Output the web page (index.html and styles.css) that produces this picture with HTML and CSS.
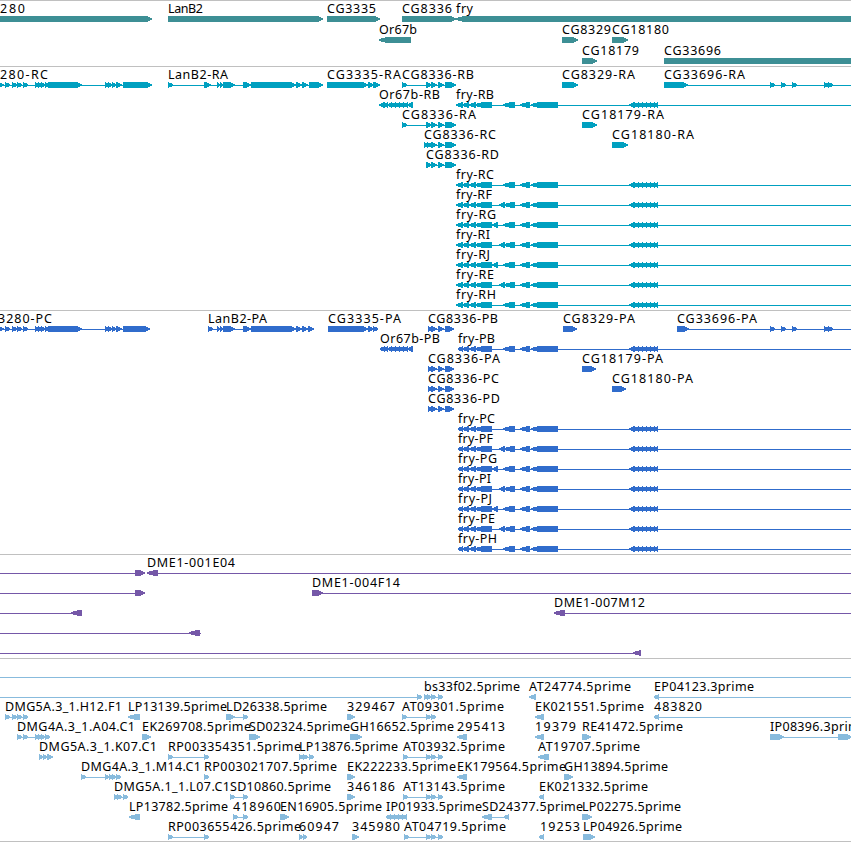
FILE: index.html
```
<!DOCTYPE html>
<html lang="en">

<head>
    <meta charset="UTF-8">
    <title>Genome Browser</title>
    <link rel="stylesheet" href="styles.css">
</head>

<body>

    <div class="browser">
        <div class="track genes" id="genes"></div>
        <div class="track transcripts" id="transcripts"></div>
        <div class="track proteins" id="proteins"></div>
        <div class="track bacs" id="bacs"></div>
        <div class="track ests" id="ests"></div>
    </div>

    <script src="tracks.js"></script>
</body>

</html>
```
FILE: styles.css
```
* {
    margin: 0;
    padding: 0;
    box-sizing: border-box;
}

body {
    background-color: white;
    overflow: hidden;
}

.browser {
    width: 851px;
    overflow: hidden;
    border-bottom: 1px solid #C0C0C0;
}

.track {
    display: flex;
    flex-direction: column;
    border-top: 1px solid #C0C0C0;
    padding-bottom: 3px;
}

/*every row is one svg, the arrows hang a bit below its box*/
.row {
    display: block;
    width: 851px;
    height: 20px;
    overflow: visible;
}

.genes .row {
    height: 21px;
}

.genes,
.ests {
    padding-bottom: 2px;
}

.genes {
    color: #3D8F95;
}

.transcripts {
    color: #00A0C0;
}

.proteins {
    color: #306CCC;
}

.bacs {
    color: #7558A8;
}

.ests {
    color: #88BBDD;
}

.shape {
    fill: currentColor;
    shape-rendering: crispEdges;
}

.label {
    fill: black;
    font-family: "Noto Sans", "DejaVu Sans", sans-serif;
    font-size: 12.5px;
}
```
FILE: tracks.js
```
/*
    A feature is [label, labelEnd, direction, exons, lineStart, lineEnd].
    The label starts at the first exon unless labelStart is given as 7th value.
    EDGE values run out of the visible region.
*/
const LEFT = -10;
const EDGE = 861;

// exons that are shared by several features
const cg3280 = [[-3, 4], [5, 10], [12, 17], [17, 22], [23, 28], [35, 39], [38, 42], [41, 45], [45, 49],
    [48, 82], [105, 109], [108, 112], [112, 116], [116, 122]];
const lanB2 = [[217, 220], [220, 223], [223, 235], [243, 251]];
const cg33696 = [[770, 775], [781, 786], [792, 797], [824, 829], [828, 833]];
const cg8336 = [[431, 437], [438, 444]];
const or67b = [[384, 388], [388, 392], [391, 396], [395, 400], [399, 404], [403, 408], [407, 413]];
const fryEnd = [[520, 530], [531, 558], [629, 635], [634, 639], [638, 643], [642, 647], [646, 651], [650, 655], [653, 658]];
const at = [[426, 431], [431, 436], [438, 443]];

// kind: '' is the plain form, 'F' and 'G' have one more exon
function fry(name, start, labelEnd, kind) {
    let exons = [[start, 463], [462, 469], [469, 476], [475, 492]];
    if (kind === 'F') {
        exons.push([499, 505], [504, 515]);
    } else if (kind === 'G') {
        exons.push([492, 498], [503, 515]);
    } else {
        exons.push([503, 515]);
    }
    return [name, labelEnd, 'L', exons.concat(fryEnd), start, EDGE];
}

const tracks = {
    genes: [
        [['280', 25, 'R', [[LEFT, 152]], LEFT, 152, 0], ['LanB2', 203, 'R', [[168, 323]]], ['CG3335', 376, 'R', [[327, 380]]],
            ['CG8336', 452, 'R', [[402, 456]]], ['fry', 473, 'L', [[456, EDGE]]]],
        [['Or67b', 417, 'L', [[379, 411]]], ['CG8329', 611, 'R', [[562, 578]]], ['CG18180', 669, 'R', [[612, 628]]]],
        [['CG18179', 639, 'R', [[582, 597]]], ['CG33696', 721, 'R', [[664, EDGE + 10]]]]
    ],
    transcripts: [
        [['280-RC', 48, 'R', cg3280.concat([[123, 152]]), LEFT, 152, 0],
            ['LanB2-RA', 228, 'R', [[168, 173], [204, 211], ...lanB2, [251, 296], [296, 302], [302, 308], [309, 323]]],
            ['CG3335-RA', 401, 'R', [[327, 368], [368, 374], [373, 380]]],
            ['CG8336-RB', 474, 'R', [[402, 407], [426, 432], ...cg8336, [445, 456]]],
            ['CG8329-RA', 635, 'R', [[562, 578]]],
            ['CG33696-RA', 745, 'R', [[664, 688], ...cg33696], 664, EDGE]],
        [['Or67b-RB', 440, 'L', [[379, 385], ...or67b]], fry('fry-RB', 456, 494, '')],
        [['CG8336-RA', 476, 'R', [[402, 407], [426, 432], ...cg8336, [445, 456]]], ['CG18179-RA', 664, 'R', [[582, 597]]]],
        [['CG8336-RC', 496, 'R', [[424, 428], [427, 432], ...cg8336, [445, 456]]], ['CG18180-RA', 694, 'R', [[612, 628]]]],
        [['CG8336-RD', 499, 'R', [[426, 432], ...cg8336, [445, 456]]]],
        [fry('fry-RC', 456, 494, '')],
        [fry('fry-RF', 456, 492, 'F')],
        [fry('fry-RG', 456, 496, 'G')],
        [fry('fry-RI', 456, 490, 'F')],
        [fry('fry-RJ', 456, 490, 'G')],
        [fry('fry-RE', 456, 494, 'F')],
        [fry('fry-RH', 456, 496, '')]
    ],
    proteins: [
        [['3280-PC', 52, 'R', cg3280.concat([[123, 150]]), LEFT, 150, -2],
            ['LanB2-PA', 267, 'R', [[208, 213], ...lanB2, [251, 296], [296, 302], [302, 308], [308, 314]]],
            ['CG3335-PA', 401, 'R', [[328, 368], [368, 374], [373, 378]]],
            ['CG8336-PB', 498, 'R', [[428, 432], ...cg8336, [445, 454]]],
            ['CG8329-PA', 635, 'R', [[563, 577]]],
            ['CG33696-PA', 757, 'R', [[677, 689], ...cg33696], 677, EDGE]],
        [['Or67b-PB', 440, 'L', [[380, 385], ...or67b]], fry('fry-PB', 458, 495, '')],
        [['CG8336-PA', 500, 'R', [[428, 432], ...cg8336, [445, 454]]], ['CG18179-PA', 663, 'R', [[582, 596]]]],
        [['CG8336-PC', 499, 'R', [[428, 432], ...cg8336, [445, 454]]], ['CG18180-PA', 693, 'R', [[612, 626]]]],
        [['CG8336-PD', 500, 'R', [[428, 432], ...cg8336, [445, 454]]]],
        [fry('fry-PC', 458, 495, '')],
        [fry('fry-PF', 458, 493, 'F')],
        [fry('fry-PG', 458, 497, 'G')],
        [fry('fry-PI', 458, 491, 'F')],
        [fry('fry-PJ', 458, 492, 'G')],
        [fry('fry-PE', 458, 495, 'F')],
        [fry('fry-PH', 458, 497, '')]
    ],
    bacs: [
        [['', 0, 'R', [[135, 145]], LEFT, 145], ['DME1-001E04', 235, 'L', [[147, 158]], 147, EDGE]],
        [['', 0, 'R', [[135, 145]], LEFT, 145], ['DME1-004F14', 400, 'R', [[312, 323]], 312, EDGE]],
        [['', 0, 'L', [[71, 82]], LEFT, 82], ['DME1-007M12', 645, 'L', [[554, 565]], 554, EDGE]],
        [['', 0, 'L', [[189, 200]], LEFT, 201]],
        [['', 0, 'L', [[633, 641]], LEFT, 641]]
    ],
    ests: [
        [['', 0, 'R', [], LEFT, EDGE]],
        [['', 0, 'R', [[417, 422]], LEFT, 422],
            ['bs33f02.5prime', 520, 'R', [[424, 428], [427, 431], [431, 436], [438, 443]]],
            ['AT24774.5prime', 631, 'L', [[529, 536]]],
            ['EP04123.3prime', 754, 'L', [[654, 659]], 654, EDGE]],
        [['DMG5A.3_1.H12.F1', 122, 'R', [[5, 10], [12, 17], [17, 22], [23, 28]]],
            ['LP13139.5prime', 227, 'L', [[128, 140]]],
            ['LD26338.5prime', 327, 'R', [[226, 235], [243, 248]]],
            ['329467', 395, 'R', [[347, 355]]],
            ['AT09301.5prime', 504, 'R', [[402, 407], [426, 431], [431, 436]]],
            ['EK021551.5prime', 644, 'L', [[535, 544]]],
            ['483820', 702, 'L', [[654, 659]], 654, EDGE]],
        [['DMG4A.3_1.A04.C1', 135, 'R', [[17, 22], [23, 28], [35, 39], [38, 42], [41, 45], [45, 50]]],
            ['EK269708.5prime', 251, 'R', [[142, 151]]],
            ['SD02324.5prime', 350, 'R', [[249, 260]]],
            ['GH16652.5prime', 454, 'R', [[350, 362]]],
            ['295413', 505, 'L', [[457, 467]]],
            ['19379', 576, 'L', [[535, 544]]],
            ['RE41472.5prime', 683, 'R', [[582, 591]]],
            ['IP08396.3prime', 867, 'R', [[770, 784], [838, 852]], 770, EDGE]],
        [['DMG5A.3_1.K07.C1', 157, 'R', [[39, 43], [43, 47], [47, 53]]],
            ['RP003354351.5prime', 301, 'R', [[168, 173], [204, 209]]],
            ['LP13876.5prime', 398, 'R', [[299, 304], [303, 308], [309, 314]]],
            ['AT03932.5prime', 505, 'R', [[403, 408], ...at]],
            ['AT19707.5prime', 640, 'L', [[538, 549]]]],
        [['DMG4A.3_1.M14.C1', 201, 'R', [[81, 86], [105, 109], [109, 113], [112, 116], [116, 121]]],
            ['RP003021707.5prime', 337, 'R', [[204, 209]]],
            ['EK222233.5prime', 456, 'R', [[347, 355]]],
            ['EK179564.5prime', 566, 'L', [[457, 467]]],
            ['GH13894.5prime', 668, 'R', [[564, 573]]]],
        [['DMG5A.1_1.L07.C1', 230, 'R', [[114, 118], [117, 122], [123, 128]]],
            ['SD10860.5prime', 331, 'R', [[230, 235], [243, 248]]],
            ['346186', 395, 'R', [[347, 355]]],
            ['AT13143.5prime', 505, 'R', [[403, 408], ...at]],
            ['EK021332.5prime', 648, 'L', [[539, 544]]]],
        [['LP13782.5prime', 228, 'L', [[129, 140]]],
            ['418960', 281, 'R', [[233, 238], [243, 248]]],
            ['EN16905.5prime', 382, 'R', [[280, 289]]],
            ['IP01933.5prime', 482, 'L', [[386, 391], [390, 395], [394, 399], [398, 403], [402, 407]]],
            ['SD24377.5prime', 583, 'L', [[482, 492], [504, 509]]],
            ['LP02275.5prime', 681, 'R', [[582, 592]]]],
        [['RP003655426.5prime', 301, 'R', [[168, 173], [204, 209]]],
            ['60947', 339, 'R', [[299, 303], [303, 307]]],
            ['345980', 400, 'R', [[352, 359]]],
            ['AT04719.5prime', 506, 'R', [[404, 409], ...at]],
            ['19253', 580, 'L', [[539, 544]], 539, 544, 540],
            ['LP04926.5prime', 682, 'R', [[583, 595]]]]
    ]
};

// box with a rounded arrow head, 6px high
function exonPath(start, end, dir) {
    let head = Math.min(dir === 'R' ? 6 : 8, end - start);
    let back = start;
    let tip = end;
    let sign = 1;
    if (dir === 'L') {
        back = end;
        tip = start;
        sign = -1;
    }
    let neck = tip - sign * head;
    let mid = tip - sign * head * 0.45;
    let nose = tip - sign * 0.4;
    return `M${back} 15H${neck}L${mid} 16L${nose} 17L${tip} 18L${nose} 19L${mid} 20L${neck} 21H${back}Z`;
}

function drawFeature(feature) {
    let [name, labelEnd, dir, exons, from, to, labelStart] = feature;
    if (from === undefined) {
        from = exons[0][0];
        to = exons[exons.length - 1][1];
    }
    if (labelStart === undefined) {
        labelStart = from;
    }
    let d = `M${from} 18H${to}V19H${from}Z`;
    let out = `<path class="shape" d="${d}"/>`;
    for (let exon of exons) {
        out += `<path class="shape" d="${exonPath(exon[0], exon[1], dir)}"/>`;
    }
    if (name) {
        out += `<text class="label" x="${labelStart}" y="12" textLength="${labelEnd - labelStart}">${name}</text>`;
    }
    return out;
}

for (let id in tracks) {
    document.getElementById(id).innerHTML = tracks[id]
        .map(row => `<svg class="row">${row.map(drawFeature).join('')}</svg>`)
        .join('');
}
```
